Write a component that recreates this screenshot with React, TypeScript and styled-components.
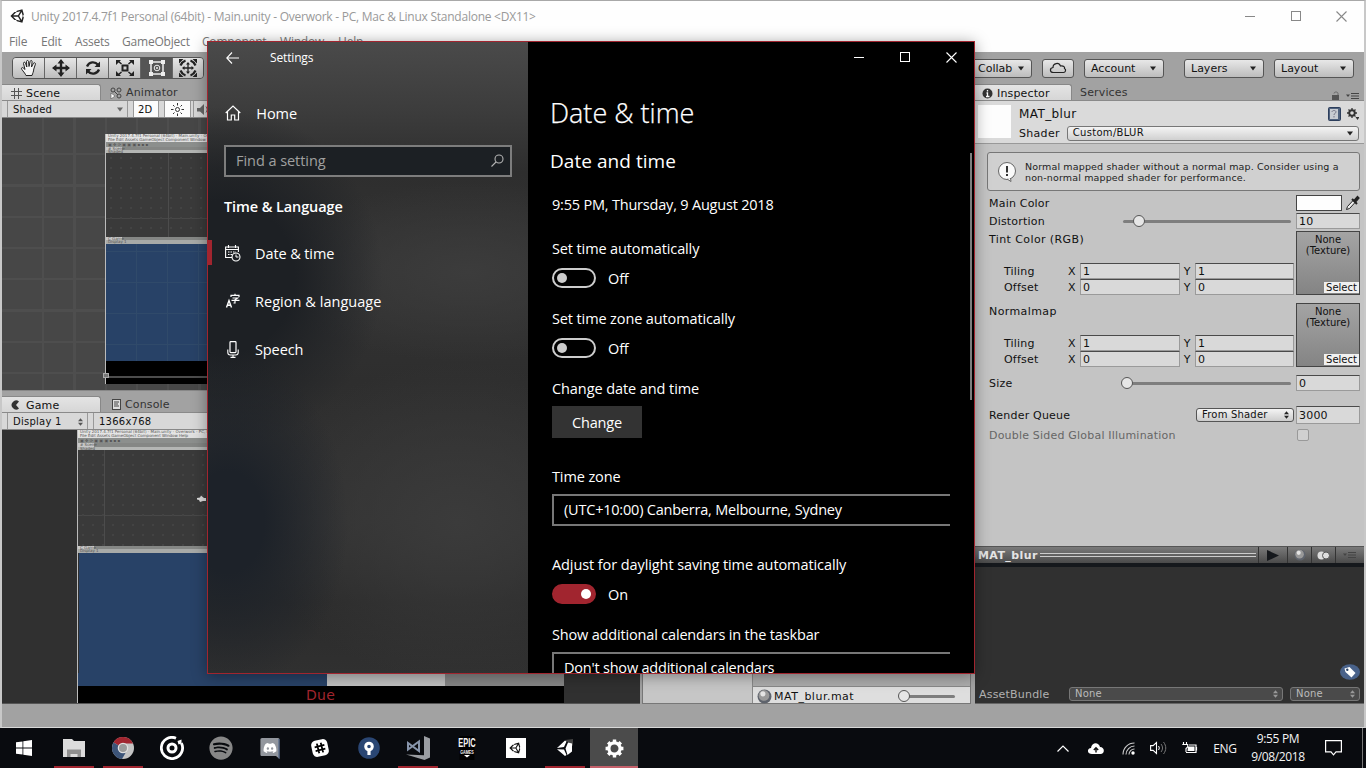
import React from "react";
import styled, { createGlobalStyle, css } from "styled-components";
import { FaSpotify, FaDiscord, FaUnity } from "react-icons/fa";

const ui = `"Open Sans", "Noto Sans", sans-serif`;
const unityFont = `"DejaVu Sans", sans-serif`;
const red = "#a1252f";

const Global = createGlobalStyle`
  * { box-sizing: border-box; }
  body { margin: 0; overflow: hidden; background: #000; }
  svg { display: block; flex: none; }
`;

const Desktop = styled.div`
  width: 1366px; height: 768px; display: flex; flex-direction: column; position: relative; overflow: hidden;
`;

/* ---------- editor window ---------- */
const Editor = styled.div`
  height: 728px; display: flex; flex-direction: column; background: #a2a2a2;
  border: 2px solid #c8c8c8; border-top: 1px solid #a8a8a8; border-bottom: 1px solid #d8d8d8;
  font-family: ${unityFont}; font-size: 11px; color: #111;
`;
const TitleBar = styled.div`
  height: 30px; background: #fefefe; display: flex; align-items: center; padding: 0 17px 0 8px;
  font-family: ${ui}; font-size: 12px; color: #999;
`;
const TitleText = styled.span`margin-left: 5px; flex: 1; letter-spacing: -0.245px; white-space: nowrap;`;
const CaptionIcons = styled.div`display: flex; gap: 34.5px;`;
const MenuBar = styled.div`
  height: 21px; background: #fefefe; display: flex; align-items: center; padding-left: 7px;
  font-family: ${ui}; font-size: 12px; color: #777; letter-spacing: -0.2px;
`;
const MenuItem = styled.span<{ $w: number }>`width: ${(p) => p.$w}px; white-space: nowrap;`;
const Toolbar = styled.div`height: 32px; display: flex; align-items: center; padding: 0 10px;`;
const ToolGroup = styled.div`
  display: flex; height: 22px; border: 1px solid #555; border-radius: 4px; overflow: hidden;
`;
const Tool = styled.div<{ $on?: boolean }>`
  width: 32px; display: flex; align-items: center; justify-content: center;
  background: ${(p) => (p.$on ? "#555" : "linear-gradient(#e6e6e6,#bdbdbd)")};
  & + & { border-left: 1px solid #666; }
  &:first-child { width: 31px; }
  &:last-child { width: 31px; }
`;
const Spacer = styled.div`flex: 1;`;
const Drop = styled.div<{ $w: number; $ml?: number }>`
  width: ${(p) => p.$w}px; margin-left: ${(p) => p.$ml ?? 0}px; height: 19px; padding: 0 7px 0 6px;
  border: 1px solid #555; border-radius: 3px; background: linear-gradient(#e8e8e8,#bcbcbc);
  display: flex; align-items: center; justify-content: space-between; line-height: 1;
`;
const Work = styled.div`flex: 1; display: flex; min-height: 0;`;
const LeftCol = styled.div`width: 638px; display: flex; flex-direction: column; overflow: hidden;`;
const MidCol = styled.div`
  width: 329px; margin-left: 2px; border: 1px solid #777; border-top: 0; display: flex; align-items: flex-end; background: #acacac;
`;
const RightCol = styled.div`flex: 1; margin-left: 4px; display: flex; flex-direction: column; min-width: 0; background: #c4c4c4;`;

const TabRow = styled.div`
  height: 17px; display: flex; align-items: flex-end; background: #a2a2a2; border-bottom: 1px solid #8a8a8a; flex: none;
`;
const Tab = styled.div<{ $w: number; $on?: boolean; $pl?: number }>`
  width: ${(p) => p.$w}px; height: 16px; display: flex; align-items: center; gap: 4px; padding: 1px 0 0 ${(p) => p.$pl ?? 9}px;
  color: #333; letter-spacing: 0.15px; line-height: 1;
  ${(p) => p.$on && css`background: linear-gradient(#e4e4e4,#d6d6d6); color: #111; border-top: 1px solid #888; border-right: 1px solid #888; border-radius: 0 3px 0 0;`}
`;
const TabEnd = styled.div`flex: 1; display: flex; justify-content: flex-end; align-items: flex-end; gap: 6px; padding: 0 4px 0 0;`;
const SubBar = styled.div`
  height: 17px; display: flex; align-items: stretch; background: #d8d8d8; border-bottom: 1px solid #888;
  font-size: 10px; flex: none; padding-left: 5px;
`;
const SubItem = styled.div<{ $w: number; $lit?: boolean; $ml?: number; $pl?: number }>`
  width: ${(p) => p.$w}px; margin-left: ${(p) => p.$ml ?? 0}px; padding: 1px 4px 0 ${(p) => p.$pl ?? 4}px;
  display: flex; align-items: center; justify-content: space-between;
  border-left: 1px solid #999; border-right: 1px solid #999; background: ${(p) => (p.$lit ? "#fcfcfc" : "transparent")};
  line-height: 1; letter-spacing: 0.25px;
`;

const SceneView = styled.div`
  height: 273px; flex: none; padding: 16px 0 0 103px; border-bottom: 1px solid #888; overflow: hidden; position: relative;
  background:
    repeating-linear-gradient(90deg, transparent 0 29px, #4e4e4e 29px 31.3px) 11px 0,
    repeating-linear-gradient(transparent 0 29px, #4e4e4e 29px 31.3px) 0 6px,
    #474747;
`;
const GameView = styled.div`flex: 1; background: #303030; border-bottom: 1px solid #555; padding-left: 75px; min-height: 0; overflow: hidden;`;
const Shot = styled.div<{ $w: number }>`
  width: ${(p) => p.$w}px; display: flex; flex-direction: column; border-left: 1px solid #bbb; background: #3a3a3a;
`;
const Strip = styled.div<{ $h: number; $bg: string }>`height: ${(p) => p.$h}px; background: ${(p) => p.$bg}; flex: none;`;
const MiniText = styled(Strip)`
  font-size: 4px; line-height: ${(p) => p.$h}px; color: #555; padding-left: 2px; white-space: nowrap; overflow: hidden;
`;
const DarkGrid = styled(Strip)<{ $x: number }>`
  background:
    radial-gradient(circle, #444 0.7px, transparent 1px) 0 0 / 10px 10px,
    linear-gradient(90deg, transparent ${(p) => p.$x}px, #4c4c4c ${(p) => p.$x}px ${(p) => p.$x + 1}px, transparent ${(p) => p.$x + 1}px),
    linear-gradient(transparent 65px, #484848 65px 66px, transparent 66px), ${(p) => p.$bg};
`;
const BlueGrid = styled(Strip)`
  background:
    repeating-linear-gradient(90deg, transparent 0 30px, #304a6a 30px 31px),
    repeating-linear-gradient(transparent 0 7px, #304a6a 7px 8px, transparent 8px 31px), ${(p) => p.$bg};
`;
const BlackBand = styled.div<{ $h: number }>`
  height: ${(p) => p.$h}px; background: #000; padding-top: 15px; flex: none;
  &::after { content: ""; display: block; height: 2px; background: #4c4c4c; }
`;
const Handle = styled.div`position: absolute; left: 101px; top: 255px; width: 6px; height: 5px; border: 1px solid #aaa; background: #777;`;
const GameRow = styled.div`display: flex; height: 13px; flex: none;`;
const GameBlock = styled.div<{ $w: number; $bg: string }>`width: ${(p) => p.$w}px; background: ${(p) => p.$bg};`;
const Due = styled.div`height: 17px; background: #000; padding-left: 228px; color: #a1252f; font-size: 14px; line-height: 18px; letter-spacing: 0.3px;`;
const CameraMark = styled.div`padding: 45px 0 0 118px;`;

const ProjectPane = styled.div`width: 110px; height: 100%; background: #c6c6c6; border-right: 1px solid #888;`;
const ProjectRow = styled.div`
  flex: 1; height: 17px; background: #dedede; border-top: 1px solid #888; display: flex; align-items: center;
  padding: 2px 15px 0 4px; gap: 2px; line-height: 1; letter-spacing: 0.5px;
`;

/* ---------- inspector ---------- */
const MatHeader = styled.div`
  height: 43px; background: #dadada; border-bottom: 1px solid #999; display: flex; padding: 4px 5px 0 3px; flex: none;
`;
const Swatch = styled.div`width: 33px; height: 33px; background: #fdfdfd; margin-right: 8px;`;
const MatInfo = styled.div`flex: 1; display: flex; flex-direction: column;`;
const MatLine = styled.div<{ $h: number }>`height: ${(p) => p.$h}px; display: flex; align-items: center; line-height: 1; letter-spacing: 0.3px;`;
const MatName = styled.span`font-size: 12px; letter-spacing: 0.4px; flex: 1;`;
const ShaderDrop = styled.div`
  flex: 1; height: 15px; margin-left: 7px; border: 1px solid #777; border-radius: 3px; padding: 0 5px;
  background: linear-gradient(#f4f4f4,#d0d0d0); display: flex; align-items: center; justify-content: space-between; font-size: 10px;
`;
const Body = styled.div`flex: 1; padding: 8px 4px 0 12px; display: flex; flex-direction: column; letter-spacing: 0.2px;`;
const Help = styled.div`
  height: 39px; flex: none; border: 1px solid #777; border-radius: 3px; background: #d0d0d0; display: flex; align-items: center;
  padding-left: 9px; gap: 8px; font-size: 9.5px; line-height: 11px; letter-spacing: 0.14px; color: #222; margin-bottom: 3px; white-space: nowrap;
`;
const Row = styled.div<{ $mt?: number; $dim?: boolean }>`
  height: 18px; flex: none; display: flex; align-items: center; padding-left: 2px; margin-top: ${(p) => p.$mt ?? 0}px;
  color: ${(p) => (p.$dim ? "#666" : "#111")}; white-space: nowrap; line-height: 1;
`;
const Label = styled.span`flex: 1;`;
const Field = styled.div<{ $w: number; $h?: number }>`
  width: ${(p) => p.$w}px; height: ${(p) => p.$h ?? 16}px; border: 1px solid #9a9a9a; border-top-color: #4a4a4a; background: #d9d9d9;
  padding-left: 2px; display: flex; align-items: center; line-height: 1;
`;
const ColorBox = styled.div`width: 46px; height: 16px; border: 1px solid #444; background: #fefefe; margin-right: 3px;`;
const Track = styled.div<{ $w: number; $mr?: number; $x: number }>`
  width: ${(p) => p.$w}px; margin-right: ${(p) => p.$mr ?? 0}px; height: 3px; border-radius: 2px; background: #7e7e7e;
  display: flex; align-items: center;
  &::after { content: ""; flex: none; width: 10px; height: 10px; margin-left: ${(p) => p.$x}px; border-radius: 50%; border: 1px solid #555; background: #e6e6e6; }
`;
const TexBlock = styled.div`height: 72px; flex: none; display: flex; padding-left: 2px; line-height: 1;`;
const TexLeft = styled.div`flex: 1; display: flex; flex-direction: column;`;
const TexName = styled.div`height: 33px; padding-top: 4px; letter-spacing: 0.4px;`;
const VecRow = styled.div`height: 16px; display: flex; align-items: center; padding-left: 15px;`;
const VecLabel = styled.span<{ $w: number }>`width: ${(p) => p.$w}px; flex: none;`;
const Texture = styled.div`
  width: 64px; height: 64px; margin: 1px 0 0 2px; border: 1px solid #444; background: linear-gradient(#a4a4a4,#848484);
  display: flex; flex-direction: column; justify-content: space-between; align-items: flex-end;
  font-size: 10px; line-height: 11px; text-align: center; letter-spacing: 0;
`;
const TexCaption = styled.div`width: 100%; padding-top: 2px;`;
const Select = styled.div`width: 35px; height: 11px; background: #f0f0f0; font-size: 10px; line-height: 11px; margin-bottom: 1px;`;
const SmallDrop = styled.div<{ $w: number; $ml?: number; $dark?: boolean }>`
  width: ${(p) => p.$w}px; height: 14px; margin-left: ${(p) => p.$ml ?? 0}px; padding: 0 4px 0 5px; border-radius: 3px;
  border: 1px solid ${(p) => (p.$dark ? "#777" : "#555")}; display: flex; align-items: center; justify-content: space-between;
  background: ${(p) => (p.$dark ? "#4a4a4a" : "linear-gradient(#f4f4f4,#ccc)")}; color: ${(p) => (p.$dark ? "#bbb" : "#111")};
  font-size: 10px; line-height: 1;
`;
const Check = styled.div`width: 12px; height: 12px; border: 1px solid #999; border-radius: 2px; background: #d0d0d0; margin-right: 51px;`;
const PreviewBar = styled.div`
  height: 17px; flex: none; display: flex; align-items: center; background: linear-gradient(#7a7a7a,#4a4a4a); border-top: 1px solid #555;
  padding-left: 3px; color: #e4e4e4; font-weight: bold; line-height: 1; letter-spacing: 0.4px;
`;
const Rails = styled.div`flex: 1; height: 4px; border: solid #ccc; border-width: 1px 0; margin: 0 2px 0 2px;`;
const PreviewBtn = styled.div<{ $w: number }>`
  width: ${(p) => p.$w}px; height: 16px; border-left: 1px solid #333; display: flex; align-items: center; justify-content: center;
`;
const Preview = styled.div`
  height: 141px; flex: none; background: #303030; border-top: 4px solid #15181c; border-bottom: 1px solid #666;
  display: flex; flex-direction: column; justify-content: flex-end; color: #b0b0b0; letter-spacing: 0.2px;
`;
const TagRow = styled.div`display: flex; justify-content: flex-end; padding: 0 4px 5px 0;`;
const BundleRow = styled.div`display: flex; height: 18px; align-items: center; padding: 0 4px 0 4px;`;
const Status = styled.div`height: 23px; background: #a2a2a2; flex: none;`;

/* ---------- settings window ---------- */
const Settings = styled.div`
  position: absolute; left: 207px; top: 41px; width: 768px; height: 633px; border: 1px solid ${red}; display: flex; overflow: hidden;
  font-family: ${ui}; font-size: 14.5px; color: #fff; background: #000;
`;
const Shadow = styled.div`
  position: absolute; left: 207px; top: 41px; width: 768px; height: 633px; box-shadow: 0 2px 14px rgba(0,0,0,.38);
`;
const Side = styled.div`
  width: 320px; display: flex; flex-direction: column; letter-spacing: -0.05px;
  background:
    radial-gradient(ellipse 120px 170px at 20px 480px, #1d2229 0 30%, transparent),
    radial-gradient(ellipse 160px 170px at 15px 235px, #1d2024 0 45%, transparent),
    radial-gradient(ellipse 200px 90px at 260px 230px, #3c3c3c, transparent),
    radial-gradient(ellipse 200px 160px at 250px 480px, #3b3b3b, transparent),
    linear-gradient(#4a4a4a 0, #3c3c3c 70px, #2e2e2e 130px, #333 230px, #2e2e2e 340px, #323232 480px, #2b2b2b 560px, #303030);
`;
const SideTop = styled.div`height: 31px; display: flex; align-items: center; padding-left: 18px; gap: 30px; font-size: 12px; margin-bottom: 16px; letter-spacing: -0.15px;`;
const NavItem = styled.div<{ $on?: boolean; $ls?: number }>`
  height: 48px; display: flex; align-items: center; padding-left: 15px; gap: 12px; position: relative; letter-spacing: ${(p) => p.$ls ?? -0.1}px;
  ${(p) => p.$on && css`&::before { content: ""; position: absolute; left: 0; top: 11px; width: 4px; height: 25px; background: ${red}; }`}
`;
const IconSlot = styled.span`width: 20px; display: flex; justify-content: center;`;
const SearchBox = styled.div`
  margin: 8px 16px 0; height: 32px; border: 2px solid #7d7d7d; background: #1c2024; display: flex; align-items: center;
  justify-content: space-between; padding: 0 6px 1px 10px; color: #a0a0a0;
`;
const SideHeading = styled.div`font-weight: 600; padding: 19px 16px 0; height: 52px; line-height: 22px; letter-spacing: -0.1px;`;
const Main = styled.div`flex: 1; background: #000; display: flex; flex-direction: column; min-width: 0;`;
const Caption = styled.div`height: 31px; flex: none; display: flex; justify-content: flex-end; align-items: center; gap: 35px; padding-right: 17px;`;
const PageTitle = styled.h1`margin: 20px 0 0 22px; font-size: 27px; font-weight: 300; line-height: 40px; letter-spacing: 0; -webkit-text-stroke: 0.25px #fff;`;
const Scroll = styled.div`flex: 1; display: flex; min-height: 0; margin-top: 11px; overflow: hidden;`;
const Options = styled.div`flex: 1; padding: 0 0 0 24px; letter-spacing: -0.15px; line-height: 20px; overflow: hidden;`;
const SectionTitle = styled.h2`margin: 4px 0 0 -2px; font-size: 19px; font-weight: 400; line-height: 26px; letter-spacing: 0.05px;`;
const Line = styled.div<{ $mt: number; $ls?: number }>`
  margin-top: ${(p) => p.$mt}px; height: 20px; white-space: nowrap; letter-spacing: ${(p) => p.$ls ?? -0.12}px;
`;
const ToggleRow = styled.div`display: flex; align-items: center; gap: 12px; height: 20px; margin-top: 9px;`;
const ToggleText = styled.span`padding-top: 2px;`;
const Toggle = styled.div<{ $on?: boolean }>`
  width: 44px; height: 20px; border-radius: 10px; display: flex; align-items: center;
  border: 2px solid ${(p) => (p.$on ? red : "#ccc")}; background: ${(p) => (p.$on ? red : "#000")};
  justify-content: ${(p) => (p.$on ? "flex-end" : "flex-start")}; padding: 0 3px;
  &::after { content: ""; width: 10px; height: 10px; border-radius: 50%; background: ${(p) => (p.$on ? "#fff" : "#ccc")}; }
`;
const Button = styled.div`width: 90px; height: 32px; margin-top: 7px; background: #333; line-height: 33px; text-align: center;`;
const Combo = styled.div`
  width: 398px; height: 32px; margin-top: 7px; border: 2px solid #777; border-right: 0; padding-left: 10px; line-height: 28px; letter-spacing: -0.21px;
`;
const ScrollBar = styled.div`width: 2px; height: 247px; background: #7e7e7e; margin: 9px 2px 0 0;`;

/* ---------- taskbar ---------- */
const Taskbar = styled.div`
  height: 40px; background: #090b0f; display: flex; align-items: stretch; color: #f4f4f4; font-family: ${ui}; font-size: 12px;
`;
const Apps = styled.div`display: flex; gap: 1.1px;`;
const AppButton = styled.div<{ $state?: "open" | "active" }>`
  width: 48px; display: flex; align-items: center; justify-content: center; position: relative;
  background: ${(p) => (p.$state === "active" ? "#4b4b4b" : "transparent")};
  &:first-child { margin-right: 1px; }
  ${(p) => p.$state && css`&::after { content: ""; position: absolute; bottom: 0; height: 2px;
    left: ${p.$state === "active" ? 0 : 4}px; right: ${p.$state === "active" ? 0 : 4}px; background: ${p.$state === "active" ? "#c4606a" : red}; }`}
`;
const Epic = styled.div`
  width: 24px; height: 24px; display: flex; flex-direction: column; align-items: center; background: #000; padding-top: 1px;
  font: bold 12px/12px "Liberation Sans", sans-serif; transform: scaleX(0.62);
`;
const EpicSub = styled.span`font-size: 6px; line-height: 6px; font-weight: bold;`;
const Tray = styled.div`flex: 1; display: flex; justify-content: flex-end; align-items: center;`;
const TraySlot = styled.div<{ $w: number }>`width: ${(p) => p.$w}px; display: flex; justify-content: center; letter-spacing: -0.3px;`;
const Clock = styled.div`width: 68px; text-align: center; line-height: 18px; letter-spacing: -0.35px; padding-bottom: 1px;`;
const ShowDesktop = styled.div`width: 4px; height: 40px; border-left: 1px solid #777;`;

/* ---------- icons ---------- */
type Kids = { w: number; h: number; vb?: string; children: React.ReactNode };
const Svg = ({ w, h, vb, children }: Kids) => (
  <svg width={w} height={h} viewBox={vb ?? `0 0 ${w} ${h}`} fill="none">{children}</svg>
);
const WinButtons = ({ color }: { color: string }) => (
  <>
    <Svg w={11} h={11}><path d="M0 5.5h10" stroke={color} /></Svg>
    <Svg w={11} h={11}><rect x=".5" y=".5" width="9" height="9" stroke={color} /></Svg>
    <Svg w={11} h={11}><path d="M.5 .5l10 10M10.5 .5l-10 10" stroke={color} strokeWidth="1.1" /></Svg>
  </>
);
const Down = ({ c = "#222" }: { c?: string }) => <Svg w={6} h={5}><path d="M0 .5h6L3 4.5z" fill={c} /></Svg>;
const UpDown = ({ c = "#222" }: { c?: string }) => <Svg w={5} h={8}><path d="M0 3.2L2.5 .3 5 3.2zM0 4.8h5L2.5 7.7z" fill={c} /></Svg>;
const Burger = () => <Svg w={14} h={8}><path d="M0 2.5h4L2 5z" fill="#444" /><path d="M5 1.5h8M5 4h8M5 6.5h8" stroke="#444" /></Svg>;
const Sphere = ({ s }: { s: number }) => (
  <Svg w={s} h={s} vb="0 0 14 14"><circle cx="7" cy="7" r="6.5" fill="#5e636c" /><circle cx="6.5" cy="6" r="5" fill="#999" /><circle cx="5.5" cy="4.5" r="2.4" fill="#e4e4e4" /></Svg>
);
const Hand = () => (
  <Svg w={18} h={18}><path d="M6 16.5C4.500 13 1 10.500 1.500 9c.8-1.300 2.500.6 3.500 1.500L3.500 4.500c-.2-1.500 1.500-1.800 2-.4L6.800 8 6.500 2.600c0-1.500 1.900-1.500 2.100 0L9 7.500l1.200-5.200c.4-1.300 2-1 1.900.4L11.500 8l2-3.800c.8-1 2.300-.3 1.900 1L13.800 10c-.3 3-1 4-1.800 6.500z" fill="#f5f5f5" stroke="#222" /></Svg>
);
const Move = () => (
  <Svg w={18} h={18}><path d="M9 2v14M2 9h14" stroke="#222" strokeWidth="2.400" /><path d="M9 0l3.500 4.500h-7zM9 18l3.500-4.500h-7zM0 9l4.500-3.500v7zM18 9l-4.500-3.500v7z" fill="#222" /></Svg>
);
const Rotate = () => (
  <Svg w={18} h={16}><path d="M3 6.500C5 1.500 11 1 14 4.800M15 9.500c-2 5-8 5.500-11 1.700" stroke="#222" strokeWidth="2.300" /><path d="M16 1.500v5.500h-5.500zM2 14.500V9h5.500z" fill="#222" /></Svg>
);
const Scale = () => (
  <Svg w={18} h={16}><rect x="6.500" y="5.500" width="5" height="5" stroke="#222" strokeWidth="2" /><path d="M2 1l3.500 3M16 1l-3.500 3M2 15l3.500-3M16 15l-3.500-3" stroke="#222" strokeWidth="1.600" /><path d="M0 0h5L0 5zM18 0h-5l5 5zM0 16h5L0 11zM18 16h-5l5-5z" fill="#222" /></Svg>
);
const RectTool = () => (
  <Svg w={18} h={18}><rect x="3" y="3" width="12" height="12" stroke="#eee" strokeWidth="1.500" /><path d="M1 1h4v4H1zM13 1h4v4h-4zM1 13h4v4H1zM13 13h4v4h-4z" fill="#eee" /><circle cx="9" cy="9" r="2.800" stroke="#eee" /><circle cx="9" cy="9" r="1" fill="#eee" /></Svg>
);
const Combined = () => (
  <Svg w={20} h={18}><path d="M6 9h8M10 5v8" stroke="#222" strokeWidth="1.300" /><path d="M10 3l2 2.500H8zM10 15l2-2.500H8zM4 9l2.500-2v4zM16 9l-2.500-2v4z" fill="#222" /><path d="M2.500 6.500C3.500 4 5 2.500 7.500 1.500M17.500 6.500c-1-2.500-2.500-4-5-5M2.500 11.500c1 2.500 2.500 4 5 5M17.500 11.500c-1 2.500-2.500 4-5 5" stroke="#222" strokeWidth="2.200" /><path d="M1 0h4.500L1 4.500zM19 0h-4.500L19 4.500zM1 18h4.500L1 13.500zM19 18h-4.500l4.500-4.500z" fill="#222" /></Svg>
);
const GearShape = ({ s, c, hole }: { s: number; c: string; hole: number }) => (
  <Svg w={s} h={s} vb="0 0 20 20">
    {[0, 45, 90, 135].map((a) => <path key={a} d="M10 .6v3.400M10 16v3.400" stroke={c} strokeWidth="3.600" transform={`rotate(${a} 10 10)`} />)}
    <circle cx="10" cy="10" r={(7.6 + hole) / 2} stroke={c} strokeWidth={7.6 - hole} />
  </Svg>
);

const MINI = "Unity 2017.4.7f1 Personal (64bit) - Main.unity - Overwork - PC, Mac & Linux Standalone";

const Capture = ({ w, dark, game }: { w: number; dark: number; game?: boolean }) => (
  <Shot $w={w}>
    <MiniText $h={4} $bg="#e4e4e4">{MINI}</MiniText>
    <MiniText $h={4} $bg="#e0e0e0">File Edit Assets GameObject Component Window Help</MiniText>
    <MiniText $h={5} $bg="#8c8f8d">▣ ✥ ⟳ ▣ ▣ ▣ ▪ ▪ ▪</MiniText>
    <MiniText $h={game ? 4 : 3} $bg="linear-gradient(90deg,#c8c8c8 16px,#858785 16px)"># Scene</MiniText>
    <MiniText $h={3} $bg="#b4b6b4">Shaded</MiniText>
    <DarkGrid $h={dark} $bg="#3a3a3a" $x={game ? 26 : 62}>
      {game && <CameraMark><Svg w={10} h={8}><path d="M1 3l3-.5L5 .5l3 2.500h2v3H7l-3 1-1-2-2-.5z" fill="#ddd" /></Svg></CameraMark>}
    </DarkGrid>
    <MiniText $h={3} $bg="linear-gradient(90deg,#c8c8c8 16px,#858785 16px)">C Game</MiniText>
    <MiniText $h={4} $bg="#a8aaa8">Display 1</MiniText>
    {game ? (
      <>
        <Strip $h={120} $bg="linear-gradient(90deg,#303030 1px,#284267 1px)" />
        <GameRow><GameBlock $w={249} $bg="#284267" /><GameBlock $w={118} $bg="#c0c0c0" /><GameBlock $w={119} $bg="#868686" /></GameRow>
        <Due>Due</Due>
      </>
    ) : (
      <>
        <BlueGrid $h={117} $bg="#284267" />
        <BlackBand $h={23} />
      </>
    )}
  </Shot>
);

const TextureSlot = ({ name }: { name: string }) => (
  <TexBlock>
    <TexLeft>
      <TexName>{name}</TexName>
      {[["Tiling", "1"], ["Offset", "0"]].map(([l, v]) => (
        <VecRow key={l}>
          <VecLabel $w={64}>{l}</VecLabel><VecLabel $w={12}>X</VecLabel><Field $w={100}>{v}</Field>
          <VecLabel $w={15}>&nbsp;Y</VecLabel><Field $w={99}>{v}</Field>
        </VecRow>
      ))}
    </TexLeft>
    <Texture><TexCaption>None<br />(Texture)</TexCaption><Select>Select</Select></Texture>
  </TexBlock>
);

const Inspector = () => (
  <RightCol>
    <TabRow>
      <Tab $w={97} $on $pl={7}>
        <Svg w={11} h={11}><circle cx="5.500" cy="5.500" r="5" fill="#333" /><path d="M5.500 2v1.500M4.500 5h1v3.500M4 8.500h3.500" stroke="#fff" strokeWidth="1.300" /></Svg>
        Inspector
      </Tab>
      <Tab $w={90} $pl={8}>Services</Tab>
      <TabEnd>
        <Svg w={8} h={9}><rect x="0" y="4" width="7" height="5" fill="#555" /><path d="M2 2.500C2 .5 6 .5 6 2.500V4" stroke="#666" /></Svg>
        <Burger />
      </TabEnd>
    </TabRow>
    <MatHeader>
      <Swatch />
      <MatInfo>
        <MatLine $h={18}>
          <MatName>MAT_blur</MatName>
          <Svg w={13} h={14}><rect x=".5" y=".5" width="12" height="13" rx="1" fill="#50627e" stroke="#2c3e5c" /><rect x="2" y="2" width="8" height="10" fill="#c8ccd2" /><path d="M4 5c0-2 4-2 4 0 0 1.500-2 1-2 3M6 9v1.500" stroke="#778" /></Svg>
          <Svg w={18} h={14} vb="-6 0 18 14"><circle cx="5" cy="6" r="2.700" stroke="#333" strokeWidth="2" /><path d="M5 1v10M0 6h10M1.500 2.500l7 7M8.500 2.500l-7 7" stroke="#333" strokeWidth="1.300" /><circle cx="5" cy="6" r="1.800" fill="#dadada" /><path d="M8.500 10h4l-2 3z" fill="#333" /></Svg>
        </MatLine>
        <MatLine $h={20}>Shader<ShaderDrop>Custom/BLUR<Down /></ShaderDrop></MatLine>
      </MatInfo>
    </MatHeader>
    <Body>
      <Help>
        <Svg w={20} h={20}><circle cx="10" cy="9" r="8.500" fill="#fafafa" stroke="#666" /><path d="M10 17l4 2.500-.5-3.500" fill="#fafafa" stroke="#666" /><path d="M10 4v6.500M10 12v2" stroke="#333" strokeWidth="2" /></Svg>
        <div>Normal mapped shader without a normal map. Consider using a<br />non-normal mapped shader for performance.</div>
      </Help>
      <Row><Label>Main Color</Label><ColorBox />
        <Svg w={15} h={16}><path d="M1.500 14.500l1-3L8.500 5l2 2-6 6.500z" fill="#eee" stroke="#222" /><path d="M7 4l5 5M9.500 5.500L12.500 2l1 1-3 3.500z" stroke="#222" strokeWidth="2" /></Svg>
      </Row>
      <Row><Label>Distortion</Label><Track $w={168} $mr={5} $x={10} /><Field $w={64}>10</Field></Row>
      <TextureSlot name="Tint Color (RGB)" />
      <TextureSlot name="Normalmap" />
      <Row><Label>Size</Label><Track $w={168} $mr={5} $x={-2} /><Field $w={64}>0</Field></Row>
      <Row $mt={14}><Label>Render Queue</Label><SmallDrop $w={98}>From Shader<UpDown /></SmallDrop><VecLabel $w={2} /><Field $w={64} $h={18}>3000</Field></Row>
      <Row $mt={2} $dim><Label>Double Sided Global Illumination</Label><Check /></Row>
    </Body>
    <PreviewBar>
      MAT_blur<Rails />
      <PreviewBtn $w={29}><Svg w={12} h={11}><path d="M0 0l12 5.500L0 11z" fill="#15181c" /></Svg></PreviewBtn>
      <PreviewBtn $w={24}><Sphere s={12} /></PreviewBtn>
      <PreviewBtn $w={24}><Svg w={13} h={9}><circle cx="4.500" cy="4.500" r="4" fill="#ddd" /><circle cx="9" cy="4.500" r="3.500" fill="#ddd" stroke="#555" /></Svg></PreviewBtn>
      <PreviewBtn $w={29}><Burger /></PreviewBtn>
    </PreviewBar>
    <Preview>
      <TagRow><Svg w={20} h={16}><ellipse cx="10" cy="8" rx="10" ry="7.800" fill="#49628a" /><path d="M4.500 4.500l5-1.500 6 6-4 4.500-6-5.500z" fill="#fff" /><circle cx="7.300" cy="5.800" r="1.200" fill="#284267" /></Svg></TagRow>
      <BundleRow>AssetBundle<Spacer /><SmallDrop $dark $w={214}>None<UpDown c="#999" /></SmallDrop><SmallDrop $dark $w={70} $ml={7}>None<UpDown c="#999" /></SmallDrop></BundleRow>
    </Preview>
  </RightCol>
);

const EditorWindow = () => (
  <Editor>
    <TitleBar>
      <FaUnity size={16} color="#222" />
      <TitleText>Unity 2017.4.7f1 Personal (64bit) - Main.unity - Overwork - PC, Mac &amp; Linux Standalone &lt;DX11&gt;</TitleText>
      <CaptionIcons><WinButtons color="#888" /></CaptionIcons>
    </TitleBar>
    <MenuBar>
      <MenuItem $w={32}>File</MenuItem><MenuItem $w={34}>Edit</MenuItem><MenuItem $w={47}>Assets</MenuItem>
      <MenuItem $w={80}>GameObject</MenuItem><MenuItem $w={78}>Component</MenuItem><MenuItem $w={58}>Window</MenuItem><MenuItem $w={40}>Help</MenuItem>
    </MenuBar>
    <Toolbar>
      <ToolGroup>
        <Tool><Hand /></Tool><Tool><Move /></Tool><Tool><Rotate /></Tool><Tool><Scale /></Tool><Tool $on><RectTool /></Tool><Tool><Combined /></Tool>
      </ToolGroup>
      <Spacer />
      <Drop $w={61}>Collab<Down /></Drop>
      <Drop $w={32} $ml={10}>
        <Svg w={18} h={12}><path d="M4.500 10.500c-4 0-4-4.500-.5-5C4 1 10 0 11.500 4c3-.5 4.500 1 4 2.500 2 1 1 4-1 4z" stroke="#222" strokeWidth="1.200" /></Svg>
      </Drop>
      <Drop $w={80} $ml={10}>Account<Down /></Drop>
      <Drop $w={80} $ml={20}>Layers<Down /></Drop>
      <Drop $w={80} $ml={10}>Layout<Down /></Drop>
    </Toolbar>
    <Work>
      <LeftCol>
        <TabRow>
          <Tab $w={99} $on><Svg w={11} h={11}><path d="M3.500 0v11M7.500 0v11M0 3.500h11M0 7.500h11" stroke="#555" /></Svg>Scene</Tab>
          <Tab $w={110}><Svg w={12} h={12}><circle cx="3" cy="3" r="2" stroke="#444" /><circle cx="9" cy="3" r="2" stroke="#444" /><circle cx="9" cy="9" r="2" stroke="#444" /><path d="M1 6l4 3-4 3z" fill="#fff" stroke="#555" strokeWidth=".6" /><path d="M4 4l4 4" stroke="#444" /></Svg>Animator</Tab>
        </TabRow>
        <SubBar>
          <SubItem $w={121} $pl={5}>Shaded<Down c="#666" /></SubItem>
          <SubItem $w={26} $ml={5} $lit>2D</SubItem>
          <SubItem $w={27} $ml={5} $lit $pl={6}><Svg w={13} h={13}><circle cx="6.500" cy="6.500" r="2" stroke="#333" /><path d="M6.500 0v2.500M6.500 10.500V13M0 6.500h2.500M10.500 6.500H13M2 2l1.500 1.500M9.500 9.500L11 11M2 11l1.500-1.500M9.500 3.500L11 2" stroke="#333" /></Svg></SubItem>
          <SubItem $w={30} $ml={2} $pl={3}><Svg w={12} h={11}><path d="M0 4h3l4-4v11L3 7.500H0z" fill="#666" /><path d="M9 2.500c1.500 2 1.500 4 0 6" stroke="#666" /></Svg></SubItem>
        </SubBar>
        <SceneView><Capture w={500} dark={84} /><Handle /></SceneView>
        <Strip $h={5} $bg="#a2a2a2" />
        <TabRow>
          <Tab $w={99} $on><Svg w={11} h={10}><path d="M8 1.500A4.500 4.500 0 1 0 8 8.500L5 5z" fill="#333" /></Svg>Game</Tab>
          <Tab $w={110} $pl={11}><Svg w={9} h={11}><rect x=".5" y=".5" width="8" height="10" fill="#ddd" stroke="#444" /><path d="M2 3h5M2 5h4M2 7h5" stroke="#444" /></Svg>Console</Tab>
        </TabRow>
        <SubBar>
          <SubItem $w={81} $pl={5}>Display 1<UpDown c="#555" /></SubItem>
          <SubItem $w={150} $ml={5} $pl={5}>1366x768</SubItem>
        </SubBar>
        <GameView><Capture w={487} dark={96} game /></GameView>
      </LeftCol>
      <MidCol>
        <ProjectPane />
        <ProjectRow><Sphere s={15} />MAT_blur.mat<Spacer /><Track $w={56} $x={-1} /></ProjectRow>
      </MidCol>
      <Inspector />
    </Work>
    <Status />
  </Editor>
);

const SettingsWindow = () => (
  <Settings>
    <Side>
      <SideTop>
        <Svg w={14} h={12}><path d="M6 .5L.8 6 6 11.500M1 6h12" stroke="#fff" strokeWidth="1.100" /></Svg>
        Settings
      </SideTop>
      <NavItem><IconSlot><Svg w={16} h={16}><path d="M.7 8L8 1l7.300 7M2.500 6.500v8.500h3.800v-5h3.400v5h3.800V6.500" stroke="#fff" strokeWidth="1.200" /></Svg></IconSlot>&#8202;Home</NavItem>
      <SearchBox>Find a setting<Svg w={13} h={13}><circle cx="8" cy="5" r="4" stroke="#b4b4b4" strokeWidth="1.100" /><path d="M5 8l-4.500 4.500" stroke="#b4b4b4" strokeWidth="1.100" /></Svg></SearchBox>
      <SideHeading>Time &amp; Language</SideHeading>
      <NavItem $on>
        <IconSlot><Svg w={16} h={17}><path d="M7 12.500H.6V2h12.800v5M.6 4.500h12.800M3.500 0v3M10.500 0v3" stroke="#fff" strokeWidth="1.100" /><path d="M3 7h8M3 9.500h4" stroke="#fff" strokeDasharray="1.500 1" /><circle cx="11" cy="12" r="4" stroke="#fff" strokeWidth="1.100" /><path d="M11 9.500V12h2.500" stroke="#fff" /></Svg></IconSlot>Date &amp; time
      </NavItem>
      <NavItem $ls={0.04}>
        <IconSlot><Svg w={16} h={16}><path d="M1.500 14.500L4 7.500l2.500 7M2.500 12.200h3" stroke="#fff" strokeWidth="1.400" /><path d="M6 4V2.300h8V4M10 .8v1.500M7.500 5h5L10 6.700V10H8.500M6.500 7.400h8" stroke="#fff" strokeWidth="1.200" /></Svg></IconSlot>Region &amp; language
      </NavItem>
      <NavItem>
        <IconSlot><Svg w={12} h={17}><rect x="3" y=".6" width="6" height="11" rx=".8" stroke="#fff" strokeWidth="1.200" /><path d="M.8 8.500v3c0 2 1 2.500 2.500 2.500h5.400c1.500 0 2.500-.5 2.500-2.500v-3M6 14v2.500M3.500 16.400h5" stroke="#fff" strokeWidth="1.100" /></Svg></IconSlot>Speech
      </NavItem>
    </Side>
    <Main>
      <Caption><WinButtons color="#fff" /></Caption>
      <PageTitle>Date &amp; time</PageTitle>
      <Scroll>
        <Options>
          <SectionTitle>Date and time</SectionTitle>
          <Line $mt={21} $ls={-0.2}>9:55 PM, Thursday, 9 August 2018</Line>
          <Line $mt={24}>Set time automatically</Line>
          <ToggleRow><Toggle /><ToggleText>Off</ToggleText></ToggleRow>
          <Line $mt={21}>Set time zone automatically</Line>
          <ToggleRow><Toggle /><ToggleText>Off</ToggleText></ToggleRow>
          <Line $mt={21} $ls={-0.08}>Change date and time</Line>
          <Button>Change</Button>
          <Line $mt={29}>Time zone</Line>
          <Combo>(UTC+10:00) Canberra, Melbourne, Sydney</Combo>
          <Line $mt={29} $ls={-0.09}>Adjust for daylight saving time automatically</Line>
          <ToggleRow><Toggle $on /><ToggleText>On</ToggleText></ToggleRow>
          <Line $mt={21} $ls={-0.17}>Show additional calendars in the taskbar</Line>
          <Combo>Don't show additional calendars</Combo>
        </Options>
        <ScrollBar />
      </Scroll>
    </Main>
  </Settings>
);

const TaskbarView = () => (
  <Taskbar>
    <Apps>
      <AppButton><Svg w={16} h={16}><path d="M0 2.300L6.500 1.400v6.100H0zM7.300 1.300L16 0v7.500H7.300zM0 8.400h6.500v6.200L0 13.700zM7.300 8.400H16V16l-8.700-1.300z" fill="#fff" /></Svg></AppButton>
      <AppButton $state="open"><Svg w={22} h={18}><path d="M0 0h9l2 2h11v16H0z" fill="#dcdcdc" /><path d="M4 18v-7.500h14V18h-3.500v-3h-7v3z" fill="#8f8f8f" /></Svg></AppButton>
      <AppButton $state="open"><Svg w={22} h={22}><circle cx="11" cy="11" r="11" fill="#c4c4c4" /><path d="M11 11L1.500 5.500A11 11 0 0 1 21 6.500H11z" fill={red} /><path d="M11 11L1.500 5.500A11 11 0 0 0 10 22l3.500-6z" fill="#3c5478" /><circle cx="11" cy="11" r="5.300" fill="#e0e0e0" /><circle cx="11" cy="11" r="4" fill="#9a9a9a" /></Svg></AppButton>
      <AppButton><Svg w={24} h={24}><path d="M16 2.200A10.600 10.600 0 1 0 21.400 7.200" stroke="#fff" strokeWidth="2.800" /><circle cx="12" cy="12" r="4" stroke="#fff" strokeWidth="3" /><path d="M17.500 5l4-1.500v4l-3 1z" fill="#fff" /></Svg></AppButton>
      <AppButton><FaSpotify size={24} color="#878787" /></AppButton>
      <AppButton><Svg w={20} h={21}><path d="M2 0h16c1 0 1.500.8 1.500 1.600V21L16 18H2C1 18 .4 17.400.4 16.400V1.600C.4.8 1 0 2 0z" fill="#93979e" /><path d="M19 1v19.500" stroke="#405a85" /><g transform="translate(3 3)"><FaDiscord size={14} color="#fff" /></g></Svg></AppButton>
      <AppButton><Svg w={20} h={20}><rect x="1.800" y="1.800" width="16.400" height="16.400" rx="4.500" fill="#fff" transform="rotate(-12 10 10)" /><path d="M8 5v10M12 5v10M5 8h10M5 12h10" stroke="#000" strokeWidth="1.800" transform="rotate(-14 10 10)" /></Svg></AppButton>
      <AppButton><Svg w={22} h={22}><circle cx="11" cy="11" r="10.800" fill="#2a4673" /><circle cx="11" cy="9.500" r="3.300" stroke="#fff" strokeWidth="3" /><path d="M11 13v5" stroke="#fff" strokeWidth="3.200" /></Svg></AppButton>
      <AppButton $state="open"><Svg w={24} h={24}><path d="M18 0l6 2.500v19L18.500 24 0 18.500l18 .8z" fill="#9a9da2" /><path d="M2 7v6.500L13 5.500v9.500L2 7z" stroke="#8795ab" strokeWidth="2" /></Svg></AppButton>
      <AppButton><Epic>EPIC<EpicSub>GAMES</EpicSub><Svg w={10} h={3}><path d="M0 0h10L5 2.500z" fill="#fff" /></Svg></Epic></AppButton>
      <AppButton><Svg w={20} h={20}><rect width="20" height="20" fill="#fff" /><g transform="translate(3 3.500)"><FaUnity size={13} color="#111" /></g></Svg></AppButton>
      <AppButton $state="open"><Svg w={17} h={18}><path d="M8 1l8-1v7z" fill="#444" /><path d="M0 9l8-7.500 1.500 1L7 8zM0 10.200L7 10.500 9.500 16l-1.500 1zM11 3.500l4 1v8l-4.500 3.500L8.500 9.500z" fill="#fff" /></Svg></AppButton>
      <AppButton $state="active"><GearShape s={19} c="#fff" hole={4.2} /></AppButton>
    </Apps>
    <Tray>
      <TraySlot $w={29}><Svg w={12} h={7}><path d="M.5 6.500L6 1l5.500 5.500" stroke="#fff" strokeWidth="1.200" /></Svg></TraySlot>
      <TraySlot $w={37}><Svg w={16} h={11}><path d="M4 11C-1.500 11-1 5 3 5 3.500-.5 10.500-1.500 12 4c5 0 5 7 .5 7z" fill="#fff" /><path d="M8 9.500V5M5.800 7L8 4.800 10.200 7" stroke="#111" strokeWidth="1.400" /></Svg></TraySlot>
      <TraySlot $w={28}><Svg w={13} h={13}><path d="M1 12.500C1 6 6 1 12.500 1M4 12.500C4 8 8 4 12.500 4M7 12.500C7 9.500 9.500 7 12.500 7" stroke="#ccc" strokeWidth="1.100" /><circle cx="11" cy="11" r="1.700" fill="#fff" /></Svg></TraySlot>
      <TraySlot $w={32}><Svg w={17} h={14}><path d="M.6 4.600h2.500L6.500 1.500v11L3.100 9.400H.6z" stroke="#fff" strokeWidth="1.100" /><path d="M8.500 5c1 1.500 1 2.500 0 4" stroke="#fff" /><path d="M11 3c2 2.500 2 5.500 0 8M13.500 1c3 4 3 8 0 12" stroke="#777" /></Svg></TraySlot>
      <TraySlot $w={32}><Svg w={16} h={12}><path d="M1.500 0v2M4.500 0v2M.3 2.500h5.400v2.500L4 6.500v3.500" stroke="#fff" strokeWidth="1.100" /><path d="M7 3h7v7.500H4M14.500 5v3.500" stroke="#fff" strokeWidth="1.200" /><path d="M6 4.500h6.500V9H5.500z" fill="#fff" /></Svg></TraySlot>
      <TraySlot $w={38}>ENG</TraySlot>
      <Clock>9:55 PM<br />9/08/2018</Clock>
      <TraySlot $w={42}><Svg w={17} h={16}><path d="M.6.6h15.800v11.300H11l-2.500 3-2.500-3H.6z" stroke="#fff" strokeWidth="1.200" /></Svg></TraySlot>
      <TraySlot $w={8} />
      <ShowDesktop />
    </Tray>
  </Taskbar>
);

export default function App() {
  return (
    <Desktop>
      <Global />
      <EditorWindow />
      <TaskbarView />
      <Shadow />
      <SettingsWindow />
    </Desktop>
  );
}
